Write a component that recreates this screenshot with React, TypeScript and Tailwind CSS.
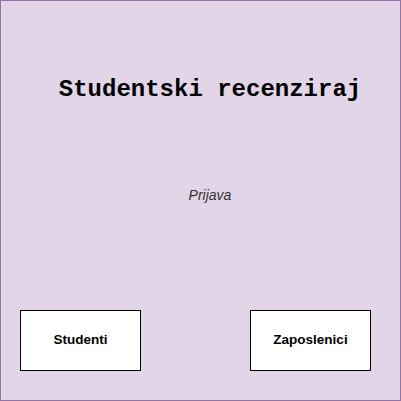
export default function App() {
  return (
    <div className="w-[401px] h-[401px] border border-[#9673a6] bg-[#e1d5e7] flex flex-col pl-[19px] pt-[75px]">
      <h1 className="h-[28px] leading-[28px] text-center text-[24px] font-bold text-black font-['Liberation_Mono',monospace]">
        Studentski recenziraj
      </h1>
      <p className="mt-[81px] h-[20px] leading-[20px] text-center text-[14px] italic text-[#333333] font-['Liberation_Sans',Arial,sans-serif]">
        Prijava
      </p>
      <div className="mt-[105px] flex gap-[109px]">
        <button className="w-[121px] h-[61px] border border-black bg-white flex items-center justify-center text-[13.5px] font-bold text-black font-['Liberation_Sans',Arial,sans-serif]">
          Studenti
        </button>
        <button className="w-[121px] h-[61px] border border-black bg-white flex items-center justify-center text-[13.5px] font-bold text-black font-['Liberation_Sans',Arial,sans-serif]">
          Zaposlenici
        </button>
      </div>
    </div>
  );
}
